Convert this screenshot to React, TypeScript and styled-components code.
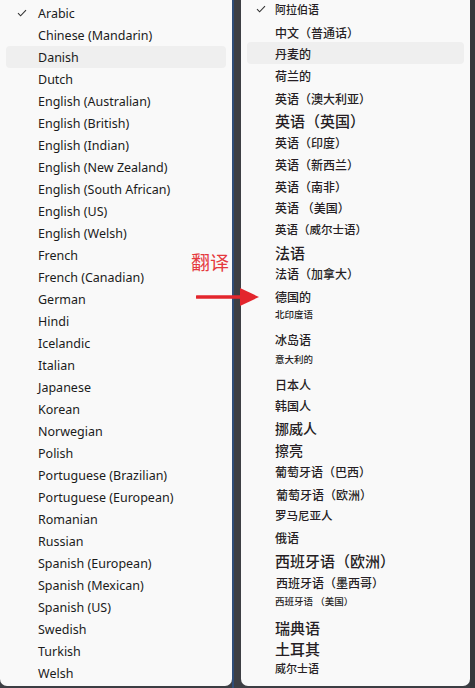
import React from 'react';
import styled, { createGlobalStyle } from 'styled-components';

const GlobalStyle = createGlobalStyle`
  html, body {
    margin: 0;
    padding: 0;
    background: #3c3e43;
    overflow: hidden;
  }
`;

const englishNames = [
  'Arabic', 'Chinese (Mandarin)', 'Danish', 'Dutch', 'English (Australian)',
  'English (British)', 'English (Indian)', 'English (New Zealand)',
  'English (South African)', 'English (US)', 'English (Welsh)', 'French',
  'French (Canadian)', 'German', 'Hindi', 'Icelandic', 'Italian', 'Japanese',
  'Korean', 'Norwegian', 'Polish', 'Portuguese (Brazilian)',
  'Portuguese (European)', 'Romanian', 'Russian', 'Spanish (European)',
  'Spanish (Mexican)', 'Spanish (US)', 'Swedish', 'Turkish', 'Welsh',
];

const chineseNames: { t: string; y: number; size: number; dx?: number }[] = [
  { t: '阿拉伯语', y: 9, size: 11 },
  { t: '中文（普通话）', y: 32, size: 12 },
  { t: '丹麦的', y: 53, size: 12 },
  { t: '荷兰的', y: 75, size: 12 },
  { t: '英语（澳大利亚）', y: 98, size: 12 },
  { t: '英语（英国）', y: 120, size: 15 },
  { t: '英语（印度）', y: 142, size: 12 },
  { t: '英语（新西兰）', y: 164, size: 12 },
  { t: '英语（南非）', y: 186, size: 12 },
  { t: '英语 （美国）', y: 207, size: 12 },
  { t: '英语（威尔士语）', y: 229, size: 11.5 },
  { t: '法语', y: 252, size: 15 },
  { t: '法语（加拿大）', y: 273, size: 12 },
  { t: '德国的', y: 296, size: 12 },
  { t: '北印度语', y: 314, size: 9.5 },
  { t: '冰岛语', y: 339, size: 12 },
  { t: '意大利的', y: 359, size: 9.5 },
  { t: '日本人', y: 384, size: 12 },
  { t: '韩国人', y: 405, size: 12 },
  { t: '挪威人', y: 428, size: 14 },
  { t: '擦亮', y: 450, size: 14 },
  { t: '葡萄牙语（巴西）', y: 471, size: 12 },
  { t: '葡萄牙语（欧洲）', y: 494, size: 12, dx: 1 },
  { t: '罗马尼亚人', y: 515, size: 11.5 },
  { t: '俄语', y: 537, size: 12 },
  { t: '西班牙语（欧洲）', y: 560, size: 15 },
  { t: '西班牙语（墨西哥）', y: 582, size: 12, dx: 1 },
  { t: '西班牙语 （美国）', y: 601, size: 9.5 },
  { t: '瑞典语', y: 627, size: 15 },
  { t: '土耳其', y: 648, size: 15 },
  { t: '威尔士语', y: 668, size: 11 },
];

const Screen = styled.div`
  position: relative;
  display: flex;
  width: 475px;
  height: 688px;
  background: #3c3e43;
  overflow: hidden;
`;

const Panel = styled.div<{ $width: number }>`
  width: ${(p) => p.$width}px;
  height: 686px;
  flex: none;
  background: #f9f9f9;
  border-radius: 0 0 7px 7px;
  box-sizing: border-box;
  overflow: hidden;
`;

const Gap = styled.div<{ $width: number }>`
  width: ${(p) => p.$width}px;
  flex: none;
  background: linear-gradient(to right, #2f4d78 0, #2f4d78 2px, #3d3f44 2px);
`;

const EdgeStrip = styled.div`
  flex: 1;
  background: #35373b;
`;

const EnglishList = styled.ul`
  list-style: none;
  margin: 0;
  padding: 2px 6px 0;
`;

const EnglishRow = styled.li<{ $hover?: boolean }>`
  display: flex;
  align-items: center;
  height: 22px;
  border-radius: 4px;
  background: ${(p) => (p.$hover ? '#efefef' : 'transparent')};
  font-family: "Noto Sans", "Open Sans", sans-serif;
  font-size: 12.5px;
  color: #1b1b1b;
  white-space: nowrap;
`;

const CheckSlot = styled.span<{ $w: number }>`
  width: ${(p) => p.$w}px;
  flex: none;
  display: flex;
  justify-content: center;
`;

const ChineseList = styled.ul`
  list-style: none;
  margin: 0;
  padding: 0 6px;
`;

const ChineseRow = styled.li<{ $hover?: boolean; $shift: number; $size: number }>`
  display: flex;
  align-items: center;
  height: 22px;
  margin-top: ${(p) => p.$shift}px;
  border-radius: 4px;
  background: ${(p) => (p.$hover ? '#efefef' : 'transparent')};
  font-family: "Noto Sans CJK SC", "Noto Sans", sans-serif;
  font-size: ${(p) => p.$size}px;
  font-weight: 500;
  color: #261e24;
  white-space: nowrap;
`;

const Nudge = styled.span<{ $dx: number }>`
  padding-left: ${(p) => p.$dx}px;
`;

const Caption = styled.div`
  position: absolute;
  left: 191px;
  top: 249px;
  font-family: "Noto Sans CJK SC", sans-serif;
  font-size: 19px;
  line-height: 26px;
  color: #e53a3f;
`;

const ArrowMark = styled.svg`
  position: absolute;
  left: 196px;
  top: 286px;
`;

const Check = () => (
  <svg width="10" height="8" viewBox="0 0 10 8">
    <polyline points="1,4.2 3.6,6.8 9,1.2" fill="none" stroke="#333" strokeWidth="1.1" />
  </svg>
);

export default function App() {
  // each row is 22px tall; a margin pulls it onto the centre line seen in the shot
  let prev = -11;
  return (
    <>
      <GlobalStyle />
      <Screen>
        <Panel $width={232}>
          <EnglishList>
            {englishNames.map((name, i) => (
              <EnglishRow key={name} $hover={i === 2}>
                <CheckSlot $w={32}>{i === 0 && <Check />}</CheckSlot>
                {name}
              </EnglishRow>
            ))}
          </EnglishList>
        </Panel>
        <Gap $width={9} />
        <Panel $width={229}>
          <ChineseList>
            {chineseNames.map((item, i) => {
              const shift = item.y - prev - 22;
              prev = item.y;
              return (
                <ChineseRow key={item.t} $hover={i === 2} $shift={shift} $size={item.size}>
                  <CheckSlot $w={28}>{i === 0 && <Check />}</CheckSlot>
                  <Nudge $dx={item.dx ?? 0}>{item.t}</Nudge>
                </ChineseRow>
              );
            })}
          </ChineseList>
        </Panel>
        <EdgeStrip />
        <Caption>翻译</Caption>
        <ArrowMark width="66" height="22" viewBox="0 0 66 22">
          <line x1="1" y1="11" x2="48" y2="11" stroke="#e3262d" strokeWidth="3.4" strokeLinecap="round" />
          <polygon points="44,2 63,11 44,20" fill="#e3262d" />
        </ArrowMark>
      </Screen>
    </>
  );
}
